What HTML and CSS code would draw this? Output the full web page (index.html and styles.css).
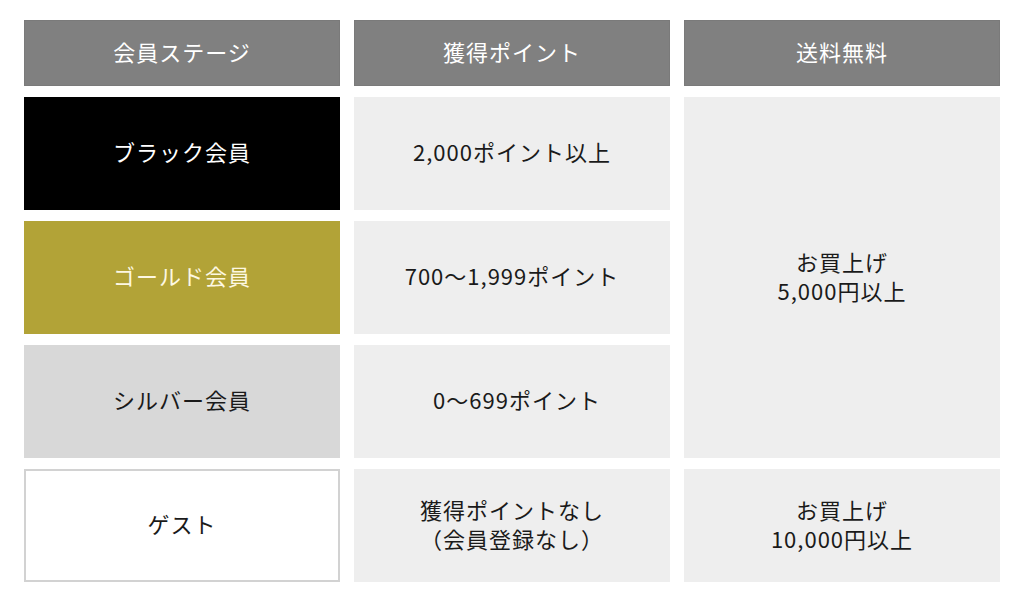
FILE: index.html
```html
<!DOCTYPE html>
<html lang="ja">
<head>
<meta charset="utf-8">
<title>会員ステージ</title>
<link rel="stylesheet" href="styles.css">
</head>
<body>
<div class="table">
  <div class="cell head">会員ステージ</div>
  <div class="cell head">獲得ポイント</div>
  <div class="cell head">送料無料</div>

  <div class="cell stage black">ブラック会員</div>
  <div class="cell light">2,000ポイント以上</div>
  <div class="cell light span3">お買上げ<br>5,000円以上</div>

  <div class="cell stage gold">ゴールド会員</div>
  <div class="cell light">700〜1,999ポイント</div>

  <div class="cell stage silver">シルバー会員</div>
  <div class="cell light shift">0〜699ポイント</div>

  <div class="cell stage guest">ゲスト</div>
  <div class="cell light">獲得ポイントなし<br>（会員登録なし）</div>
  <div class="cell light">お買上げ<br>10,000円以上</div>
</div>
</body>
</html>
```

FILE: styles.css
```css
* { box-sizing: border-box; }
html, body { margin: 0; padding: 0; background: #fff; }
body {
  font-family: "Noto Sans CJK JP", "Noto Sans", sans-serif;
  color: #1a1a1a;
}
.table {
  display: grid;
  grid-template-columns: 316px 316px 316px;
  grid-template-rows: 66px 113px 113px 113px 113px;
  column-gap: 14px;
  row-gap: 11px;
  padding: 20px 0 0 24px;
}
.cell {
  display: flex;
  align-items: center;
  justify-content: center;
  text-align: center;
  font-size: 22px;
  font-weight: 400;
  letter-spacing: 1px;
  line-height: 29px;
  padding-bottom: 4px;
}
.head {
  background: #808080;
  color: #fff;
  border: 1px solid #7a7a7a;
}
.black { background: #000; color: #fff; }
.gold { background: #b2a337; color: #fdf8e2; }
.silver { background: #d8d8d8; }
.guest { background: #fff; border: 2px solid #d2d2d2; }
.light { background: #eeeeee; }
.span3 { grid-row: span 3; }
.shift { padding-left: 10px; }
```
